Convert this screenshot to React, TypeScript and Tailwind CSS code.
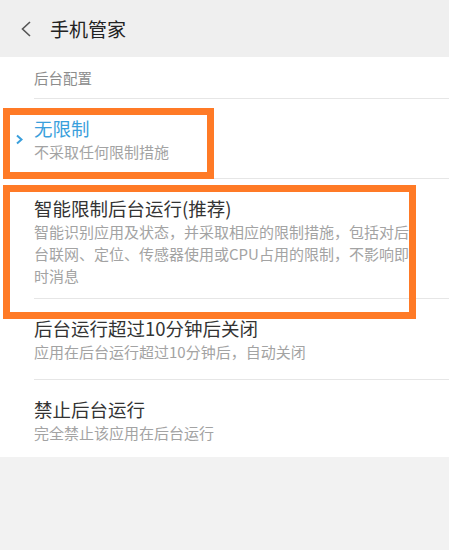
import React from "react";

const font = { fontFamily: '"Noto Sans CJK SC", "Noto Sans", sans-serif' };

function Item({
  title,
  sub,
  blue,
  last,
  pb,
}: {
  title: string;
  sub: React.ReactNode;
  blue?: boolean;
  last?: boolean;
  pb: string;
}) {
  return (
    <div className="relative">
      {blue && (
        <svg
          className="absolute left-[15px] top-[35px]"
          width="9"
          height="11"
          viewBox="0 0 9 11"
        >
          <path d="M2 1.5 L6.5 5.5 L2 9.5" fill="none" stroke="#3a9fdc" strokeWidth="2" />
        </svg>
      )}
      <div className={`ml-[34px] pt-[17px] ${pb} ${last ? "" : "border-b border-[#e6e6e6]"}`}>
        <div className={`text-[18.5px] leading-[24px] ${blue ? "text-[#3a9fdc]" : "text-[#333333]"}`}>
          {title}
        </div>
        <div className="text-[15px] leading-[22px] text-[#a3a3a3] mt-[1px]">{sub}</div>
      </div>
    </div>
  );
}

export default function App() {
  return (
    <div className="relative w-[449px] h-[550px] bg-[#f2f2f2] overflow-hidden" style={font}>
      <div className="h-[57px] bg-[#efefef] flex items-center">
        <svg className="ml-[20px]" width="12" height="16" viewBox="0 0 12 16">
          <path d="M10 1 L2.5 8 L10 15" fill="none" stroke="#555555" strokeWidth="1.6" />
        </svg>
        <div className="ml-[18px] text-[19px] text-[#222222] leading-[24px]">手机管家</div>
      </div>
      <div className="bg-white">
        <div className="ml-[34px] h-[42px] flex items-center border-b border-[#e6e6e6] text-[14.5px] text-[#8c8c8c]">
          后台配置
        </div>
        <Item title="无限制" sub="不采取任何限制措施" blue pb="pb-[15px]" />
        <Item
          title="智能限制后台运行(推荐)"
          sub={
            <>
              <span className="block">智能识别应用及状态，并采取相应的限制措施，包括对后</span>
              <span className="block">台联网、定位、传感器使用或CPU占用的限制，不影响即</span>
              <span className="block">时消息</span>
            </>
          }
          pb="pb-[11px]"
        />
        <Item title="后台运行超过10分钟后关闭" sub="应用在后台运行超过10分钟后，自动关闭" pb="pb-[16px]" />
        <Item title="禁止后台运行" sub="完全禁止该应用在后台运行" last pb="pb-[13px]" />
      </div>
      <div className="absolute left-[3px] top-[108px] w-[211px] h-[71px] border-[7px] border-[#ff7a26]" />
      <div className="absolute left-[3px] top-[185px] w-[413px] h-[134px] border-[7px] border-[#ff7a26]" />
    </div>
  );
}
